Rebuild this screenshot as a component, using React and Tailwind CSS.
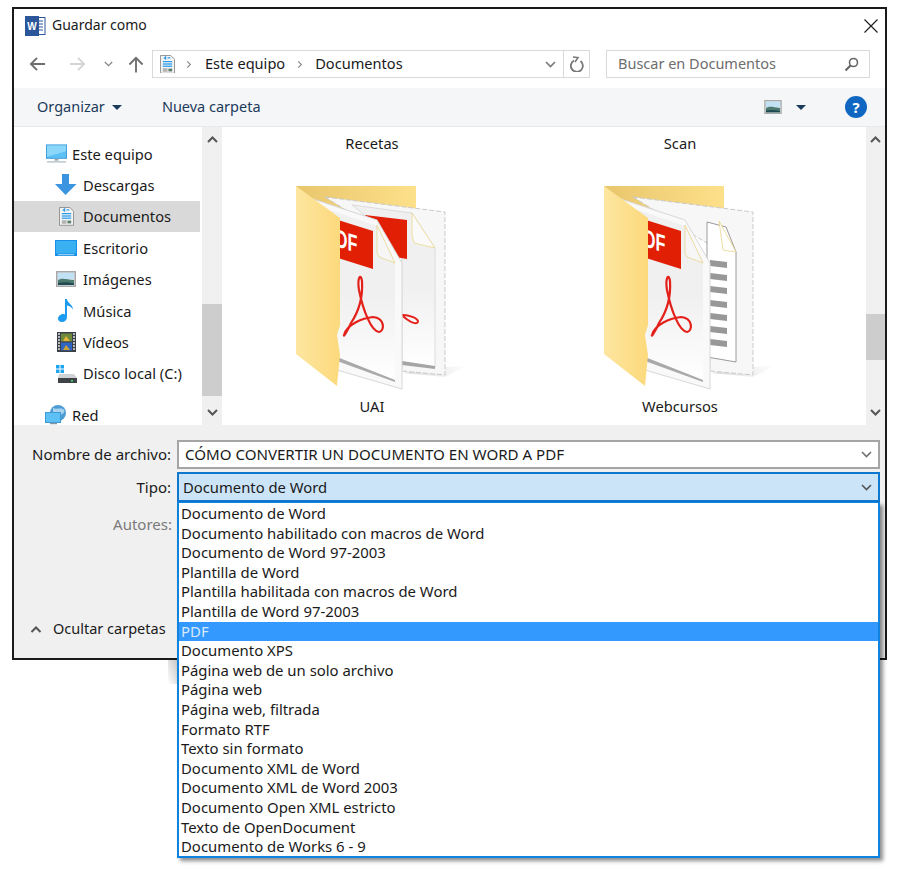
const tipos = [
  'Documento de Word',
  'Documento habilitado con macros de Word',
  'Documento de Word 97-2003',
  'Plantilla de Word',
  'Plantilla habilitada con macros de Word',
  'Plantilla de Word 97-2003',
  'PDF',
  'Documento XPS',
  'Página web de un solo archivo',
  'Página web',
  'Página web, filtrada',
  'Formato RTF',
  'Texto sin formato',
  'Documento XML de Word',
  'Documento XML de Word 2003',
  'Documento Open XML estricto',
  'Texto de OpenDocument',
  'Documento de Works 6 - 9',
]

function WordIcon() {
  return (
    <svg width="22" height="22" viewBox="0 0 22 22" className="shrink-0">
      <rect x="9" y="2.5" width="12" height="17" fill="#fff" stroke="#2b579a" />
      <path d="M12 6h7M12 9h7M12 12h7M12 15h7" stroke="#2b579a" strokeWidth="1.2" />
      <rect x="1" y="1" width="14" height="20" fill="#2b579a" />
      <text x="8" y="15" textAnchor="middle" fontSize="10" fontWeight="700" fill="#fff" fontFamily="Liberation Sans">W</text>
    </svg>
  )
}

function DocIcon({ size = 18 }) {
  return (
    <svg width={size} height={size * 1.25} viewBox="0 0 16 20" className="shrink-0">
      <path d="M.5.5h11l4 4v15H.5z" fill="#f4f4f4" stroke="#8f8f8f" />
      <path d="M4 4l2-2v3M8 3h3M3 7h10" stroke="#2f9be8" strokeWidth="1.2" fill="none" />
      <path d="M3 9.5h10M3 12h10" stroke="#49a8ec" strokeWidth="1.6" />
      <path d="M3 15h5M3 17h5" stroke="#777" />
      <path d="M9 14.5h4v3H9z" fill="#5a7f6a" />
    </svg>
  )
}

function ArrowLeftIcon({ color = '#6f6f6f', flip = false }) {
  return (
    <svg width="17" height="16" viewBox="0 0 18 16" className={flip ? 'shrink-0 rotate-180' : 'shrink-0'}>
      <path d="M17 8H2M8.5 1.5L2 8l6.500 6.500" fill="none" stroke={color} strokeWidth="2" />
    </svg>
  )
}

function Chevron({ className = '', color = '#6f6f6f', w = 11, h = 7, sw = 1.600 }) {
  return (
    <svg width={w} height={h} viewBox="0 0 11 7" className={`shrink-0 ${className}`}>
      <path d="M1 1l4.500 4.500L10 1" fill="none" stroke={color} strokeWidth={sw} />
    </svg>
  )
}

function PicIcon({ w = 20, h = 16 }) {
  return (
    <svg width={w} height={h} viewBox="0 0 20 16" className="shrink-0">
      <rect x=".75" y=".75" width="18.500" height="14.500" fill="#dfe7ee" stroke="#a9a9a9" strokeWidth="1.500" />
      <rect x="2" y="2" width="16" height="6" fill="#c0e2f4" />
      <path d="M2 9c4-2.500 8-1 16 0v5H2z" fill="#4d7a70" />
      <path d="M2 12c5-1 10-1 16 .5V14H2z" fill="#1f4a52" />
    </svg>
  )
}

const treeIcons = {
  pc: (
    <svg width="21" height="20" viewBox="0 0 22 20">
      <rect x=".5" y=".5" width="21" height="14" fill="#5cc0f5" stroke="#3d9bd8" />
      <path d="M1 1h20v6L1 13z" fill="#8ad7fa" />
      <path d="M9 15h4v2H9z" fill="#9aa8b2" />
      <path d="M1 17.500h20V19H1z" fill="#b8c4cc" />
    </svg>
  ),
  down: (
    <svg width="22" height="22" viewBox="0 0 22 22">
      <path d="M7 0h7v10h7.500L10.500 21 0 10h7z" fill="#3b94e0" />
    </svg>
  ),
  desk: (
    <svg width="22" height="16" viewBox="0 0 22 16">
      <rect width="22" height="16" fill="#1a8fe6" />
      <rect x="1" y="1" width="20" height="12.500" fill="#38b0f2" />
      <path d="M3 14.700h16" stroke="#d7f0ff" strokeWidth=".8" />
    </svg>
  ),
  music: (
    <svg width="16" height="23" viewBox="0 0 16 23">
      <path d="M7 0h2c0 4 6 5 6 11-1-2.500-3-4-6-4.500V18c0 3-2.500 5-5 5s-4-1.500-4-3.500S2.500 15 5 15c.8 0 1.500.1 2 .4z" fill="#1c9bf0" />
    </svg>
  ),
  film: (
    <svg width="19" height="20" viewBox="0 0 19 20">
      <rect width="19" height="20" fill="#3b3f46" />
      <rect x="4" y="1.500" width="11" height="8" fill="#6f8a3a" />
      <rect x="4" y="10.500" width="11" height="8" fill="#2f66c4" />
      <path d="M6 9l3-5 4 5z" fill="#e5b53a" />
      <path d="M6 18l3-5 4 5z" fill="#c9a335" />
      <path d="M1 2h2M1 5h2M1 8h2M1 11h2M1 14h2M1 17h2M16 2h2M16 5h2M16 8h2M16 11h2M16 14h2M16 17h2" stroke="#dfe3e6" strokeWidth="1.400" />
    </svg>
  ),
  disk: (
    <svg width="21" height="19" viewBox="0 0 21 19">
      <path d="M0 1h3.500v3.500H0zM4.500 1H8v3.500H4.500zM0 5.500h3.500V9H0zM4.500 5.500H8V9H4.500z" fill="#1fa5ee" />
      <path d="M3 10h15l3 4v5H2v-5z" fill="#d0d3d6" />
      <path d="M2 14h19v5H2z" fill="#3e4347" />
      <rect x="15" y="16" width="2" height="1.500" fill="#4fdc5a" />
    </svg>
  ),
  net: (
    <svg width="22" height="20" viewBox="0 0 22 20">
      <circle cx="13" cy="8" r="8" fill="#4d9cd4" />
      <path d="M8 3c3 2 9-1 11 2s-3 4-5 7-4 1-6-1z" fill="#a7d3ee" />
      <rect x=".5" y="7.500" width="15" height="10" fill="#5cc0f5" stroke="#3d9bd8" />
      <path d="M5 18.500h7" stroke="#7c98ad" strokeWidth="1.500" />
    </svg>
  ),
}

function TreeRow({ icon, label, sub, selected, className = '' }) {
  return (
    <div className={`flex h-[31.4px] items-center ${selected ? 'bg-[#d9d9d9]' : ''} ${sub ? 'pl-[40px]' : 'pl-[30px]'} ${className}`}>
      <span className="flex w-[24px] shrink-0 items-center justify-center">{icon}</span>
      <span className={sub ? 'ml-[5px]' : 'ml-[4px]'}>{label}</span>
    </div>
  )
}

function Scrollbar({ thumbTop, thumbH, className = '' }) {
  return (
    <div className={`relative flex shrink-0 flex-col items-center justify-between bg-[#f0f0f0] py-[9px] ${className}`}>
      <Chevron className="rotate-180" color="#555" sw={2} />
      <div className="absolute inset-x-0 bg-[#cdcdcd]" style={{ top: thumbTop, height: thumbH }} />
      <Chevron color="#555" sw={2} />
    </div>
  )
}

function Acrobat() {
  return (
    <path
      d="M49 150C52 139 68 133 78 132C90 133 90 146 84 147C76 146 68 125 64 105C62 92 66 88 67 96C68 112 64 126 56 138C53 145 48 153 49 150Z"
      fill="none"
      stroke="#e4201a"
      strokeWidth="2.200"
    />
  )
}

function PdfFolder({ id, lines }) {
  return (
    <svg width="180" height="210" viewBox="0 0 180 210" className="shrink-0">
      <defs>
        <linearGradient id={`${id}b`} x1="0" y1="0" x2="1" y2="0">
          <stop offset="0" stopColor="#e8c66c" />
          <stop offset="1" stopColor="#fde08a" />
        </linearGradient>
        <linearGradient id={`${id}f`} x1="0" y1="0" x2="1" y2="0">
          <stop offset="0" stopColor="#fde6a0" />
          <stop offset="1" stopColor="#fcd97c" />
        </linearGradient>
        <linearGradient id={`${id}s`} x1="0" y1="0" x2="1" y2="0">
          <stop offset="0" stopColor="#bdbdbd" />
          <stop offset="1" stopColor="#ffffff" />
        </linearGradient>
        <linearGradient id={`${id}p`} x1="0" y1="0" x2="0" y2="1">
          <stop offset="0.5" stopColor="#f0f0f0" />
          <stop offset="1" stopColor="#ffffff" />
        </linearGradient>
      </defs>
      <path d="M1 1H121V32H20z" fill={`url(#${id}b)`} />
      <path d="M108 188L150 192L172 181L150 182z" fill={`url(#${id}s)`} opacity=".6" />
      <path d="M30 12L150 27V190L107 186V60z" fill="#f7f7f7" stroke="#c9c9c9" strokeDasharray="5 2" />
      {lines ? (
        <g>
          <path d="M104 37L123 42L133 67V177L104 172z" fill="#fff" stroke="#9a9a9a" />
          <path d="M116 36L133 67L120 65z" fill="#fff" stroke="#e8d48c" strokeWidth=".8" />
          {[75, 88, 101, 115, 128, 141, 154].map((y) => (
            <path key={y} d={`M107 ${y}L124 ${y + 2}V${y + 8}L107 ${y + 6}z`} fill="#989898" />
          ))}
        </g>
      ) : (
        <g>
          <path d="M57 20L117 28L140 63V183L107 178V60z" fill={`url(#${id}p)`} stroke="#dcdcdc" />
          <path d="M70 30L112 35V74L100 72z" fill="#e01f05" />
          <path d="M117 28L140 63L119 58L117 50z" fill="#fafafa" stroke="#ecd98f" strokeWidth=".8" />
          <path d="M107 176L140 181V184L107 180z" fill="#a5a5a5" />
          <path d="M108 130C114 130 122 133 123 136C123 140 117 138 113 135C110 133 108 132 108 130Z" fill="none" stroke="#e4201a" strokeWidth="2" />
        </g>
      )}
      <path d="M15 13L82 35L107 78V204L42 185z" fill="#f9f9f9" stroke="#d8d8d8" />
      <path d="M35 25L82 41L100 78V197L42 174z" fill={`url(#${id}p)`} />
      <path d="M42 172L100 195V197L42 176z" fill="#a9a9a9" />
      <path d="M43 35L78 46V84L43 73z" fill="#e01f05" />
      <text
        transform="translate(30 58) skewY(17) scale(.65 1)"
        fontSize="25"
        fontWeight="700"
        fill="#fff"
        fontFamily="Liberation Sans"
      >
        PDF
      </text>
      <path d="M82 40L100 78L84 72L82 68z" fill="#f6f6f6" stroke="#e8d48c" strokeWidth=".8" />
      <Acrobat />
      <path d="M1 1L45 33V140L42 150L45 170L42 201L1 169z" fill={`url(#${id}f)`} />
    </svg>
  )
}

function FolderTile({ top, bottom, id, lines }) {
  return (
    <div className="flex w-[280px] flex-col items-center">
      <div className="mt-[6px] h-[20px] leading-[20px]">{top}</div>
      <div className="mt-[32px] pl-[26px]">
        <PdfFolder id={id} lines={lines} />
      </div>
      <div className="mt-[1px] h-[20px] leading-[20px]">{bottom}</div>
    </div>
  )
}

export default function App() {
  return (
    <div className="relative h-[869px] w-[915px] overflow-hidden bg-white text-[14.7px] text-[#1a1a1a] [font-family:'Noto_Sans',sans-serif]">
      {/* window shadow peeking out left of the list */}
      <div className="absolute left-[168px] top-[660px] h-[24px] w-[9px] bg-gradient-to-bl from-[#c8c8c8] to-white" />

      <div className="ml-[12px] mt-[7px] flex h-[653px] w-[875px] flex-col border-2 border-[#1a1a1a] bg-white">
        {/* title bar */}
        <div className="flex h-[33px] shrink-0 items-center pl-[10px] pr-[7px]">
          <WordIcon />
          <span className="ml-[6px] -mt-[2px] text-[14px]">Guardar como</span>
          <svg width="14" height="14" viewBox="0 0 14 14" className="ml-auto mt-[1px]">
            <path d="M.5.5l13 13M13.500.5l-13 13" stroke="#222" strokeWidth="1.200" />
          </svg>
        </div>

        {/* nav row */}
        <div className="mb-[2px] flex h-[44px] shrink-0 items-center pl-[15px]">
          <ArrowLeftIcon />
          <span className="ml-[23px]"><ArrowLeftIcon color="#d4d4d4" flip /></span>
          <Chevron className="ml-[18px]" w={9} h={6} color="#888" />
          <svg width="16" height="17" viewBox="0 0 17 17" className="ml-[15px] shrink-0">
            <path d="M8.500 17V2M1.500 8.500L8.500 1.500l7 7" fill="none" stroke="#6f6f6f" strokeWidth="2" />
          </svg>
          <div className="ml-[8px] flex h-[28px] w-[438px] items-center border border-[#d9d9d9] pl-[7px] text-[14.6px]">
            <DocIcon size={15} />
            <Chevron className="ml-[10px] -rotate-90" w={8} h={5} color="#888" />
            <span className="ml-[12px] -mt-[1px]">Este equipo</span>
            <Chevron className="ml-[11px] -rotate-90" w={8} h={5} color="#888" />
            <span className="ml-[11px] -mt-[1px]">Documentos</span>
            <Chevron className="ml-auto mr-[7px]" color="#777" />
            <div className="flex h-full w-[26px] items-center justify-center border-l border-[#d9d9d9]">
              <svg width="14" height="16" viewBox="0 0 14 16">
                <path d="M4 3.500A6 6 0 1 0 10.500 4" fill="none" stroke="#777" strokeWidth="1.800" transform="translate(0 1)" />
                <path d="M3 1l5 .5L5 6" fill="none" stroke="#777" strokeWidth="1.500" />
              </svg>
            </div>
          </div>
          <div className="ml-[16px] flex h-[28px] w-[264px] items-center border border-[#d9d9d9] pl-[11px] pr-[10px] text-[14.5px] text-[#6d6d6d]">
            <span className="-mt-[1px]">Buscar en Documentos</span>
            <svg width="15" height="15" viewBox="0 0 15 15" className="ml-auto">
              <circle cx="9.500" cy="5.500" r="4" fill="none" stroke="#666" strokeWidth="1.600" />
              <path d="M6.500 8.500L1.500 13.500" stroke="#666" strokeWidth="2.200" />
            </svg>
          </div>
        </div>

        {/* toolbar */}
        <div className="flex h-[39px] shrink-0 items-center border-b border-[#e8e8e8] bg-[#f5f6f7] pl-[23px] text-[14.5px] text-[#1c3a5c]">
          <span>Organizar</span>
          <svg width="10" height="5" viewBox="0 0 10 5" className="ml-[7px]"><path d="M0 0h10L5 5z" fill="#1c3a5c" /></svg>
          <span className="ml-[40px]">Nueva carpeta</span>
          <span className="ml-auto"><PicIcon w={18} h={14} /></span>
          <svg width="10" height="5" viewBox="0 0 10 5" className="ml-[14px]"><path d="M0 0h10L5 5z" fill="#1c3a5c" /></svg>
          <div className="ml-[39px] mr-[18px] flex h-[22px] w-[22px] items-center justify-center rounded-full bg-[#1067c2] text-[15px] font-bold text-white">?</div>
        </div>

        {/* panes */}
        <div className="flex h-[298px] shrink-0">
          <div className="w-[186px] shrink-0 pt-[11px]">
            <TreeRow icon={treeIcons.pc} label="Este equipo" />
            <TreeRow sub icon={treeIcons.down} label="Descargas" />
            <TreeRow sub selected icon={<DocIcon size={15} />} label="Documentos" />
            <TreeRow sub icon={treeIcons.desk} label="Escritorio" />
            <TreeRow sub icon={<PicIcon />} label="Imágenes" />
            <TreeRow sub icon={treeIcons.music} label="Música" />
            <TreeRow sub icon={treeIcons.film} label="Vídeos" />
            <TreeRow sub icon={treeIcons.disk} label="Disco local (C:)" />
            <TreeRow icon={treeIcons.net} label="Red" className="mt-[10px]" />
          </div>
          <Scrollbar thumbTop={177} thumbH={92} className="ml-[2px] w-[20px]" />
          <div className="flex min-w-0 flex-1 gap-[28px] overflow-hidden pl-[10px]">
            <FolderTile id="a" top="Recetas" bottom="UAI" />
            <FolderTile id="b" top="Scan" bottom="Webcursos" lines />
          </div>
          <Scrollbar thumbTop={187} thumbH={46} className="w-[19px]" />
        </div>

        {/* bottom form */}
        <div className="flex min-h-0 flex-1 flex-col bg-[#f0f0f0] pr-[5px] text-[15px]">
          <div className="mt-[15px] flex h-[29px] items-center">
            <span className="w-[157px] shrink-0 text-right">Nombre de archivo:</span>
            <div className="ml-[6px] flex h-full flex-1 items-center border-2 border-[#a5a5a5] bg-white pl-[6px] pr-[6px] text-[15.1px]">
              CÓMO CONVERTIR UN DOCUMENTO EN WORD A PDF
              <Chevron className="ml-auto" />
            </div>
          </div>
          <div className="mt-[3px] flex h-[30px] items-center">
            <span className="w-[157px] shrink-0 text-right">Tipo:</span>
            <div className="ml-[6px] flex h-full flex-1 items-center border-2 border-[#0e78cf] bg-[#cce4f7] pl-[4px] pr-[6px] text-[14.8px]">
              Documento de Word
              <Chevron className="ml-auto" color="#555" />
            </div>
          </div>
          <div className="mt-[11px] w-[158px] text-right text-[#7a7a7a]">Autores:</div>
          <div className="mt-auto mb-[18px] flex items-center pl-[16px] text-[14.5px]">
            <Chevron className="rotate-180" color="#555" w={12} sw={2} />
            <span className="ml-[11px]">Ocultar carpetas</span>
          </div>
        </div>
      </div>

      {/* open dropdown */}
      <div className="absolute left-[177px] top-[502px] h-[356px] w-[703px] border-2 border-t-[1px] border-[#0e83e0] bg-white pt-[1px] text-[14.9px] shadow-[3px_3px_4px_rgba(0,0,0,0.45)]">
        {tipos.map((t) =>
          t === 'PDF' ? (
            <div key={t} className="h-[19.6px] bg-[#3399ff] pl-[2px] leading-[19.6px] text-[#d7e8fb]">{t}</div>
          ) : (
            <div key={t} className="h-[19.6px] pl-[2px] leading-[19.6px] whitespace-nowrap">{t}</div>
          ),
        )}
      </div>
    </div>
  )
}
